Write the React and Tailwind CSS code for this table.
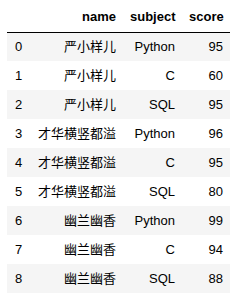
import React from 'react'

const rows = [
  ['0', '严小样儿', 'Python', '95'],
  ['1', '严小样儿', 'C', '60'],
  ['2', '严小样儿', 'SQL', '95'],
  ['3', '才华横竖都溢', 'Python', '96'],
  ['4', '才华横竖都溢', 'C', '95'],
  ['5', '才华横竖都溢', 'SQL', '80'],
  ['6', '幽兰幽香', 'Python', '99'],
  ['7', '幽兰幽香', 'C', '94'],
  ['8', '幽兰幽香', 'SQL', '88'],
]

export default function App() {
  return (
    <div
      className="w-[242px] h-[300px] bg-white pt-[2px] pl-[7px] text-[13px] text-black"
      style={{ fontFamily: '"Liberation Sans", Arial, "Noto Sans CJK SC", sans-serif' }}
    >
      <table className="border-collapse table-fixed w-[223px]">
        <colgroup>
          <col className="w-[24px]" />
          <col className="w-[92px]" />
          <col className="w-[59px]" />
          <col className="w-[48px]" />
        </colgroup>
        <thead>
          <tr className="h-[30px] border-b border-black">
            <th />
            <th className="text-right font-bold px-[7px] align-middle">name</th>
            <th className="text-right font-bold px-[7px] align-middle">subject</th>
            <th className="text-right font-bold px-[7px] align-middle">score</th>
          </tr>
        </thead>
        <tbody>
          {rows.map((r, i) => (
            <tr key={i} className={`h-[29px] ${i % 2 === 0 ? 'bg-[#f5f5f5]' : 'bg-white'}`}>
              <td className="text-left pl-[8px] align-middle">{r[0]}</td>
              <td className="text-right px-[7px] align-middle whitespace-nowrap">{r[1]}</td>
              <td className="text-right px-[7px] align-middle">{r[2]}</td>
              <td className="text-right px-[7px] align-middle">{r[3]}</td>
            </tr>
          ))}
        </tbody>
      </table>
    </div>
  )
}
